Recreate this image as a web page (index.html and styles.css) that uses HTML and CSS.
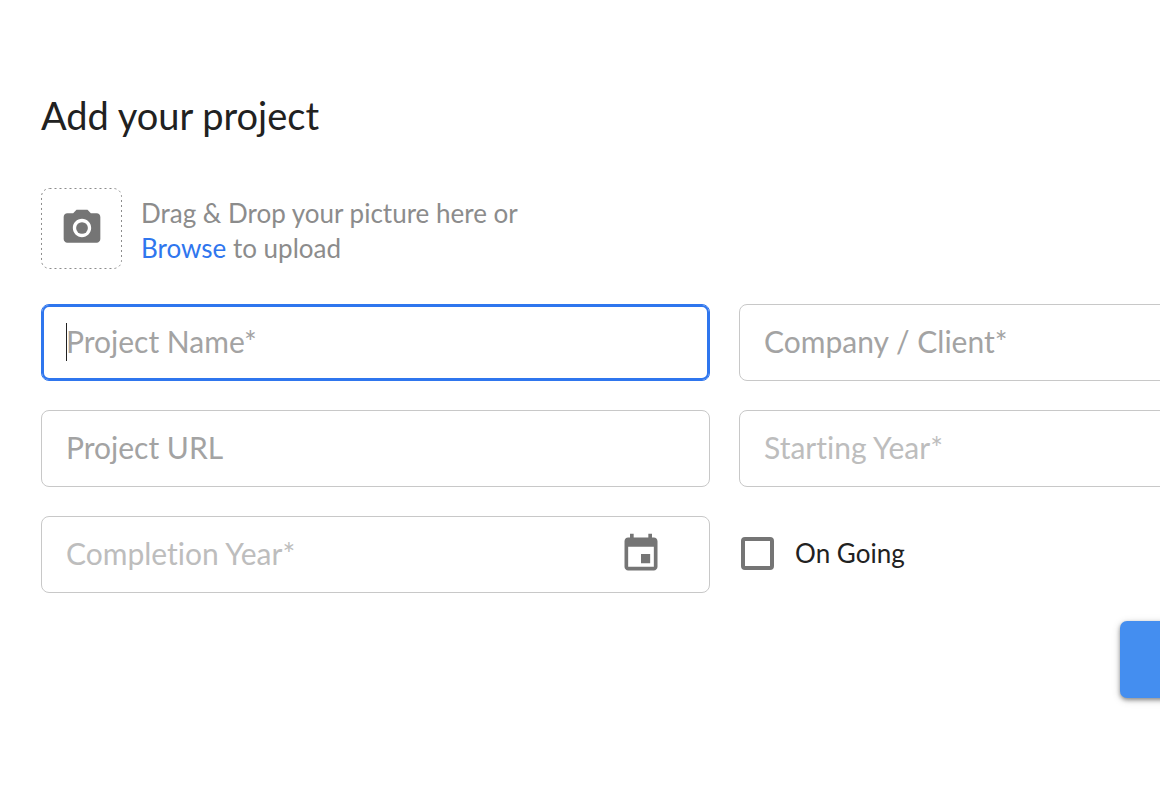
FILE: index.html
```html
<!DOCTYPE html>
<html lang="en">
<head>
<meta charset="utf-8" />
<title>Add your project</title>
<link rel="stylesheet" href="styles.css">
</head>

<body>
<form class="project-form">
	<h1 class="title">Add your project</h1>

	<div class="upload">
		<button type="button" class="upload-box" aria-label="Upload picture">
			<svg class="upload-border"><rect class="dash" x="0.5" y="0.5" rx="8"/></svg>
			<svg class="icon" viewBox="0 0 24 24"><circle cx="12" cy="12" r="3.2"/><path d="M9 2L7.17 4H4c-1.1 0-2 .9-2 2v12c0 1.1.9 2 2 2h16c1.1 0 2-.9 2-2V6c0-1.1-.9-2-2-2h-3.17L15 2H9zm3 15c-2.76 0-5-2.24-5-5s2.24-5 5-5 5 2.24 5 5-2.24 5-5 5z"/></svg>
		</button>
		<p class="upload-text">Drag &amp; Drop your picture here or<br><a href="#">Browse</a> to upload</p>
	</div>

	<div class="fields">
		<div class="field focused">
			<input type="text" name="name" placeholder="Project Name*" aria-label="Project Name">
		</div>
		<div class="field">
			<input type="text" name="company" placeholder="Company / Client*" aria-label="Company / Client">
		</div>
		<div class="field">
			<input type="text" name="url" placeholder="Project URL" aria-label="Project URL">
		</div>
		<div class="field date">
			<input type="text" name="start" placeholder="Starting Year*" aria-label="Starting Year">
		</div>
		<div class="field date">
			<input type="text" name="end" placeholder="Completion Year*" aria-label="Completion Year">
			<button type="button" class="date-btn" aria-label="Choose date">
				<svg class="icon" viewBox="0 0 24 24"><path d="M17 12h-5v5h5v-5zM16 1v2H8V1H6v2H5c-1.11 0-1.99.9-1.99 2L3 19c0 1.1.89 2 2 2h14c1.1 0 2-.9 2-2V5c0-1.1-.9-2-2-2h-1V1h-2zm3 18H5V8h14v11z"/></svg>
			</button>
		</div>
		<label class="check">
			<input type="checkbox" name="ongoing">
			<span>On Going</span>
		</label>
	</div>

	<div class="actions">
		<button type="submit" class="submit" aria-label="Save"></button>
	</div>
</form>
</body>
</html>
```

FILE: styles.css
```css
*{
	box-sizing: border-box;
}
body{
	margin: 0;
	background: #fff;
	color: #212121;
	font-family: Lato, "Liberation Sans", sans-serif;
	font-variant-ligatures: none;
	overflow-x: hidden;
}
button{
	padding: 0;
	border: 0;
	background: none;
	cursor: pointer;
}
/* the form runs past the right edge of the window */
.project-form{
	width: calc(122vw - 48px);
	margin-left: 41px;
	padding: 93px 0;
}
.title{
	margin: 0 0 51px;
	font-size: 38px;
	font-weight: 400;
	line-height: 44px;
}
.icon{
	display: block;
	width: 44px;
	height: 44px;
	fill: #757575;
}
.upload{
	display: flex;
	align-items: center;
	gap: 19px;
	margin-bottom: 35px;
}
.upload-box{
	position: relative;
	display: flex;
	align-items: center;
	justify-content: center;
	width: 81px;
	height: 81px;
	padding-bottom: 2px;
}
.upload-border{
	position: absolute;
	left: 0;
	top: 0;
	width: 100%;
	height: 100%;
}
.dash{
	width: calc(100% - 1px);
	height: calc(100% - 1px);
	fill: none;
	stroke: #8c8c8c;
	stroke-dasharray: 2 3;
}
.upload-text{
	margin: 0;
	padding-top: 4px;
	color: #8c8c8c;
	font-size: 26px;
	line-height: 35px;
}
.upload-text a{
	color: #2f76ee;
	text-decoration: none;
}
.fields{
	display: grid;
	grid-template-columns: repeat(2, minmax(0, 1fr));
	gap: 29px;
}
.field{
	position: relative;
	display: flex;
	align-items: center;
	padding: 18px 24px 20px;
	border: 1px solid #c8c8c8;
	border-radius: 8px;
}
.field input{
	flex: 1;
	min-width: 0;
	height: 37px;
	padding: 0;
	border: 0;
	outline: 0;
	background: none;
	color: #212121;
	font-family: inherit;
	font-size: 30px;
	font-variant-ligatures: none;
	line-height: 37px;
}
.field input::placeholder{
	color: #a3a3a3;
	opacity: 1;
}
.field.date input::placeholder{
	color: #bdbdbd;
}
.field.focused{
	border-color: #2f76ee;
	box-shadow: inset 0 0 0 2px #2f76ee;
}
/* text cursor */
.field.focused::before{
	content: "";
	position: absolute;
	left: 24px;
	top: 18px;
	width: 1px;
	height: 38px;
	background: #212121;
}
.date-btn{
	margin: -4px 22px -4px 0;
}
.check{
	display: flex;
	align-items: center;
	gap: 21px;
	padding: 0 0 3px 2px;
	font-size: 26px;
}
.check input{
	appearance: none;
	width: 33px;
	height: 33px;
	margin: 0;
	border: 4px solid #757575;
	border-radius: 4px;
}
.actions{
	display: flex;
	justify-content: flex-end;
	margin-top: 28px;
}
.submit{
	width: 288px;
	height: 77px;
	border-radius: 7px;
	background: #448ef0;
	box-shadow: 0 2px 4px rgba(0, 0, 0, .4), 0 2px 10px rgba(0, 0, 0, .14);
}
```
